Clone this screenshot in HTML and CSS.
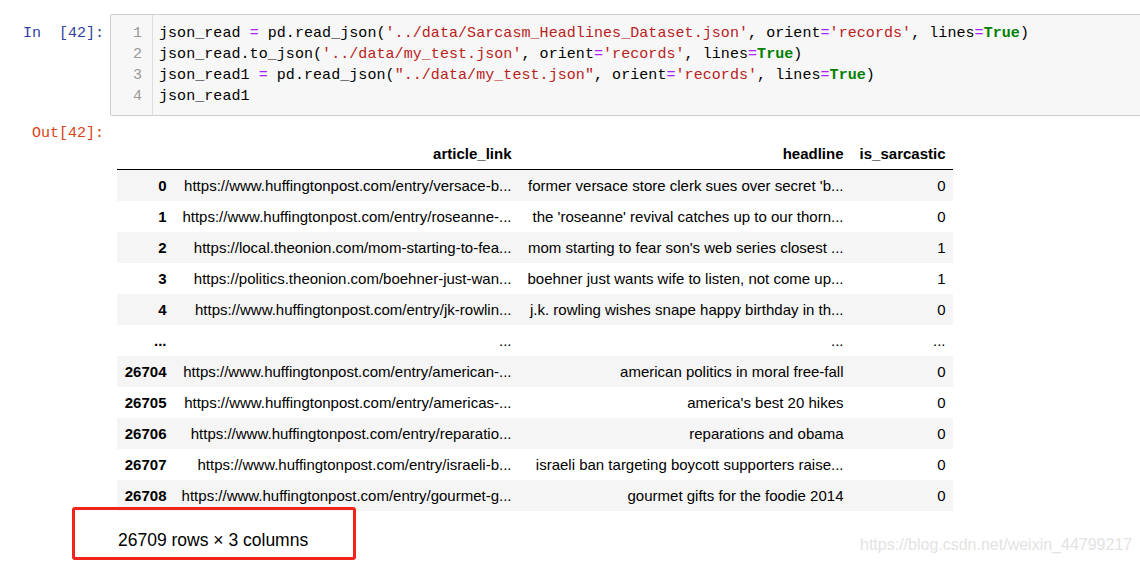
FILE: index.html
```html
<!DOCTYPE html>
<html lang="en">
<head>
<meta charset="utf-8">
<title>Notebook</title>
<link rel="stylesheet" href="styles.css">
</head>
<body>
<div class="notebook">
  <div class="cell">
    <div class="input">
      <div class="prompt in-prompt">In&nbsp;&nbsp;[42]:</div>
      <div class="input-area">
        <div class="gutter">
          <div class="ln">1</div>
          <div class="ln">2</div>
          <div class="ln">3</div>
          <div class="ln">4</div>
        </div>
        <div class="code">
          <div class="line">json_read <span class="op">=</span> pd.read_json(<span class="str">'../data/Sarcasm_Headlines_Dataset.json'</span>, orient<span class="op">=</span><span class="str">'records'</span>, lines<span class="op">=</span><span class="kw">True</span>)</div>
          <div class="line">json_read.to_json(<span class="str">'../data/my_test.json'</span>, orient<span class="op">=</span><span class="str">'records'</span>, lines<span class="op">=</span><span class="kw">True</span>)</div>
          <div class="line">json_read1 <span class="op">=</span> pd.read_json(<span class="str">"../data/my_test.json"</span>, orient<span class="op">=</span><span class="str">'records'</span>, lines<span class="op">=</span><span class="kw">True</span>)</div>
          <div class="line">json_read1</div>
        </div>
      </div>
    </div>
    <div class="output">
      <div class="prompt out-prompt">Out[42]:</div>
      <div class="output-area">
        <table class="dataframe">
          <thead>
            <tr>
              <th class="c-idx"></th>
              <th class="c-link">article_link</th>
              <th class="c-head">headline</th>
              <th class="c-sarc">is_sarcastic</th>
            </tr>
          </thead>
          <tbody>
            <tr><th>0</th><td>https://www.huffingtonpost.com/entry/versace-b...</td><td>former versace store clerk sues over secret 'b...</td><td>0</td></tr>
            <tr><th>1</th><td>https://www.huffingtonpost.com/entry/roseanne-...</td><td>the 'roseanne' revival catches up to our thorn...</td><td>0</td></tr>
            <tr><th>2</th><td>https://local.theonion.com/mom-starting-to-fea...</td><td>mom starting to fear son's web series closest ...</td><td>1</td></tr>
            <tr><th>3</th><td>https://politics.theonion.com/boehner-just-wan...</td><td>boehner just wants wife to listen, not come up...</td><td>1</td></tr>
            <tr><th>4</th><td>https://www.huffingtonpost.com/entry/jk-rowlin...</td><td>j.k. rowling wishes snape happy birthday in th...</td><td>0</td></tr>
            <tr><th>...</th><td>...</td><td>...</td><td>...</td></tr>
            <tr><th>26704</th><td>https://www.huffingtonpost.com/entry/american-...</td><td>american politics in moral free-fall</td><td>0</td></tr>
            <tr><th>26705</th><td>https://www.huffingtonpost.com/entry/americas-...</td><td>america's best 20 hikes</td><td>0</td></tr>
            <tr><th>26706</th><td>https://www.huffingtonpost.com/entry/reparatio...</td><td>reparations and obama</td><td>0</td></tr>
            <tr><th>26707</th><td>https://www.huffingtonpost.com/entry/israeli-b...</td><td>israeli ban targeting boycott supporters raise...</td><td>0</td></tr>
            <tr><th>26708</th><td>https://www.huffingtonpost.com/entry/gourmet-g...</td><td>gourmet gifts for the foodie 2014</td><td>0</td></tr>
          </tbody>
        </table>
        <p class="shape">26709 rows × 3 columns</p>
      </div>
    </div>
  </div>
  <div class="highlight-box"></div>
  <div class="watermark">https://blog.csdn.net/weixin_44799217</div>
</div>
</body>
</html>
```
FILE: styles.css
```css
html, body {
  margin: 0;
  padding: 0;
  background: #ffffff;
  overflow: hidden;
}

.notebook {
  position: relative;
  padding-top: 14px;
  height: 549px;
}

.input,
.output {
  display: flex;
  align-items: flex-start;
}

.prompt {
  flex: 0 0 110px;
  box-sizing: border-box;
  padding-right: 6px;
  text-align: right;
  font-family: "Liberation Mono", monospace;
  font-size: 15px;
  line-height: 21px;
  white-space: nowrap;
}

.in-prompt {
  color: #303f9f;
  padding-top: 9px;
}

.out-prompt {
  color: #d84315;
  padding-top: 7px;
}

.input-area {
  flex: 1;
  display: flex;
  margin-right: -40px;
  background: #f7f7f7;
  border: 1px solid #cfcfcf;
  border-radius: 2px;
}

.gutter {
  width: 42px;
  box-sizing: border-box;
  padding: 8px 10px 8px 0;
  border-right: 1px solid #dddddd;
  text-align: right;
  color: #999999;
  font-family: "Liberation Mono", monospace;
  font-size: 15px;
  line-height: 21px;
}

.code {
  padding: 8px 0 8px 6px;
  font-family: "Liberation Mono", monospace;
  font-size: 15px;
  letter-spacing: 0.06px;
  line-height: 21px;
  color: #000000;
}

.line {
  white-space: pre;
  height: 21px;
}

.op { color: #aa22ff; }
.str { color: #ba2121; }
.kw { color: #008000; font-weight: bold; }

.output-area {
  padding: 22px 0 0 7px;
}

.dataframe {
  border-collapse: collapse;
  border-spacing: 0;
  font-family: "Liberation Sans", Arial, sans-serif;
  font-size: 15px;
  line-height: 17px;
  color: #000000;
}

.dataframe th,
.dataframe td {
  padding: 7px 7.5px;
  text-align: right;
  white-space: nowrap;
  vertical-align: middle;
  box-sizing: border-box;
}

.dataframe thead th {
  font-weight: bold;
  vertical-align: bottom;
  border-bottom: 1px solid #000000;
}

.dataframe tbody th {
  font-weight: bold;
}

.dataframe tbody tr:nth-child(odd) {
  background: #f5f5f5;
}

.c-idx { width: 57px; }
.c-link { width: 345px; }
.c-head { width: 332px; }
.c-sarc { width: 102px; }

.shape {
  margin: 19px 0 0 1px;
  font-family: "Liberation Sans", Arial, sans-serif;
  font-size: 17.5px;
  line-height: 20px;
  color: #000000;
}

.highlight-box {
  position: absolute;
  left: 72px;
  top: 507px;
  width: 284px;
  height: 53px;
  box-sizing: border-box;
  border: 3px solid #f2231b;
  border-radius: 3px;
}

.watermark {
  position: absolute;
  left: 860px;
  top: 535px;
  font-family: "Liberation Sans", Arial, sans-serif;
  font-size: 16px;
  line-height: 20px;
  color: #e3e3e3;
  white-space: nowrap;
}
```
